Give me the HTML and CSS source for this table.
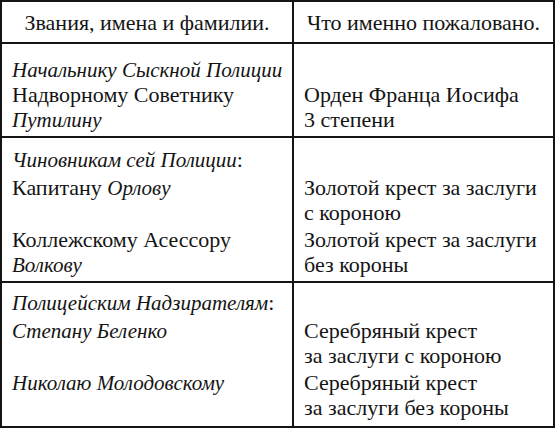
FILE: index.html
```html
<!DOCTYPE html>
<html lang="ru">
<head>
<meta charset="utf-8">
<title>Награды</title>
<link rel="stylesheet" href="styles.css">
</head>
<body>
<div class="table">
  <div class="cell head">Звания, имена и фамилии.</div>
  <div class="cell head">Что именно пожаловано.</div>

  <div class="cell row1">
    <p><i>Начальнику Сыскной Полиции</i><br>Надворному Советнику<br><i>Путилину</i></p>
  </div>
  <div class="cell row1">
    <p>&nbsp;<br>Орден Франца Иосифа<br>3 степени</p>
  </div>

  <div class="cell row">
    <p><i>Чиновникам сей Полиции</i>:</p>
    <p>Капитану <i>Орлову</i><br>&nbsp;</p>
    <p>Коллежскому Асессору<br><i>Волкову</i></p>
  </div>
  <div class="cell row">
    <p>&nbsp;</p>
    <p>Золотой крест за заслуги<br>с короною</p>
    <p>Золотой крест за заслуги<br>без короны</p>
  </div>

  <div class="cell row last">
    <p><i>Полицейским Надзирателям</i>:</p>
    <p><i>Степану Беленко</i><br>&nbsp;</p>
    <p><i>Николаю Молодовскому</i></p>
  </div>
  <div class="cell row last">
    <p>&nbsp;</p>
    <p>Серебряный крест<br>за заслуги с короною</p>
    <p>Серебряный крест<br>за заслуги без короны</p>
  </div>
</div>
</body>
</html>
```

FILE: styles.css
```css
html, body {
  margin: 0;
  padding: 0;
  background: #fff;
}
body {
  font-family: "Liberation Serif", "Times New Roman", serif;
  font-size: 22px;
  line-height: 25px;
  color: #141414;
}
.table {
  display: grid;
  grid-template-columns: 292px 261px;
  width: 553px;
  border-top: 2px solid #141414;
  border-left: 2px solid #141414;
}
.cell {
  border-right: 2px solid #141414;
  border-bottom: 2px solid #141414;
  padding: 0 0 0 10px;
}
.cell p {
  margin: 0;
}
.cell p + p {
  margin-top: 2.5px;
}
.head {
  text-align: center;
  padding: 8px 0 7px;
}
.row1 {
  padding-top: 13px;
  padding-bottom: 4px;
}
.row {
  padding-top: 9px;
  padding-bottom: 4px;
}
.row.last {
  padding-top: 7px;
  padding-bottom: 6px;
}
i {
  font-style: italic;
  font-size: 21px;
  line-height: 1;
}
```
